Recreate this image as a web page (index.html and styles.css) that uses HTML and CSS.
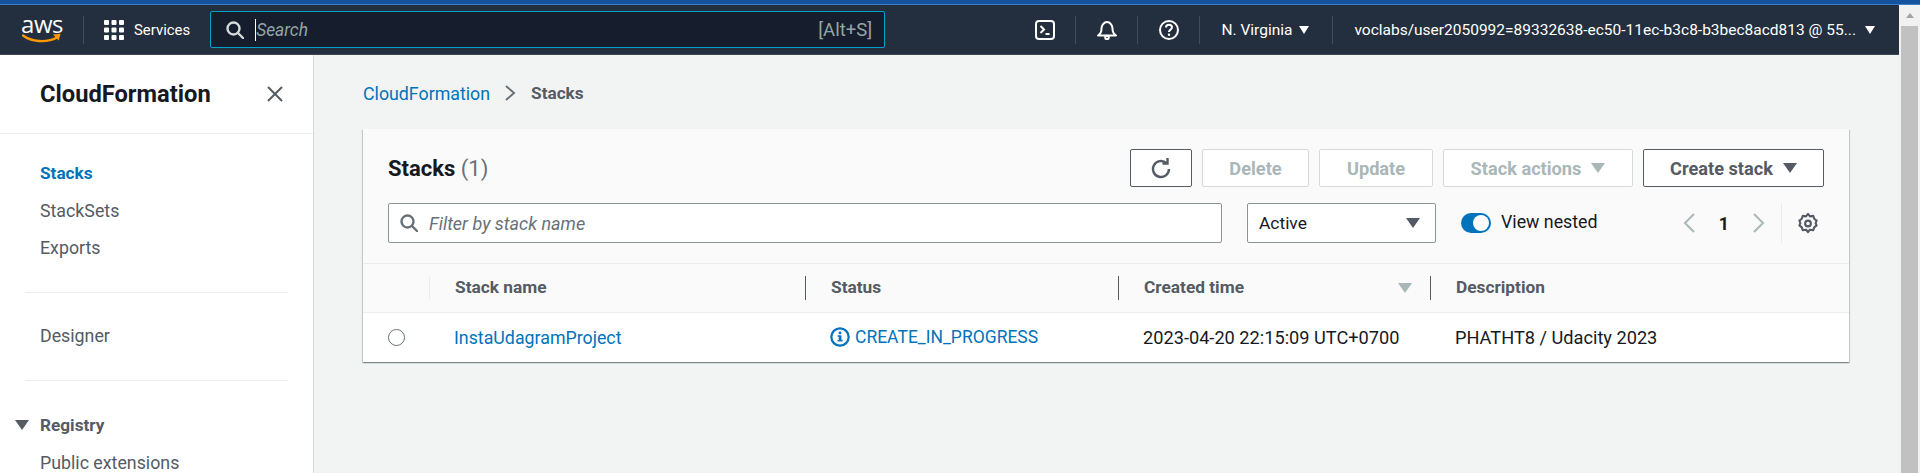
FILE: index.html
```html
<!DOCTYPE html>
<html lang="en">

    <head>
        <meta charset="UTF-8">
        <meta name="viewport" content="width=device-width, initial-scale=1.0">
        <title>Stacks - CloudFormation</title>
        <link rel="stylesheet" href="styles.css">
    </head>

    <body>
        <div class="top-strip"></div>
        <div class="page">
            <div class="page-content">
                <header class="topnav">
                    <a class="logo" href="#">
                        <span class="logo-text">aws</span>
                        <svg class="logo-smile" width="40" height="11" viewBox="0 0 40 11">
                            <path d="M1 2.5C9 8.5 24 10.5 35 4.5" fill="none" stroke="#f90" stroke-width="2.4" stroke-linecap="round" />
                            <path d="M31 1.6L38.6 0.8L36.6 7.6Z" fill="#f90" />
                        </svg>
                    </a>
                    <span class="nav-sep nav-sep-logo"></span>
                    <a class="services" href="#">
                        <svg width="20" height="20" viewBox="0 0 20 20" fill="#fff">
                            <rect x="0" y="0" width="5" height="5" rx="1" />
                            <rect x="7.5" y="0" width="5" height="5" rx="1" />
                            <rect x="15" y="0" width="5" height="5" rx="1" />
                            <rect x="0" y="7.5" width="5" height="5" rx="1" />
                            <rect x="7.5" y="7.5" width="5" height="5" rx="1" />
                            <rect x="15" y="7.5" width="5" height="5" rx="1" />
                            <rect x="0" y="15" width="5" height="5" rx="1" />
                            <rect x="7.5" y="15" width="5" height="5" rx="1" />
                            <rect x="15" y="15" width="5" height="5" rx="1" />
                        </svg>
                        <span>Services</span>
                    </a>
                    <div class="global-search">
                        <svg width="18" height="18" viewBox="0 0 18 18" fill="none" stroke="#d5dbdb" stroke-width="2.4">
                            <circle cx="7.5" cy="7.5" r="6" />
                            <path d="M12 12l5 5" stroke-linecap="round" />
                        </svg>
                        <span class="caret-line"></span>
                        <span class="search-hint">Search</span>
                        <span class="search-keys">[Alt+S]</span>
                    </div>
                    <div class="nav-right">
                        <a class="nav-icon" href="#">
                            <svg width="20" height="20" viewBox="0 0 20 20" fill="none" stroke="#fff" stroke-width="2">
                                <rect x="1" y="1" width="18" height="18" rx="3" />
                                <path d="M5.5 6l3.5 3.5-3.5 3.5M10.5 14h4" />
                            </svg>
                        </a>
                        <span class="nav-sep"></span>
                        <a class="nav-icon" href="#">
                            <svg width="20" height="20" viewBox="0 0 20 20" fill="none" stroke="#fff" stroke-width="2" stroke-linejoin="round">
                                <path d="M1 15.5c2.5-1.5 3.5-3.5 3.5-7 0-3.2 2.4-6.5 5.5-6.500s5.500 3.300 5.500 6.500c0 3.500 1 5.500 3.500 7z" />
                                <circle cx="10" cy="17.5" r="1.800" />
                            </svg>
                        </a>
                        <span class="nav-sep"></span>
                        <a class="nav-icon" href="#">
                            <svg width="20" height="20" viewBox="0 0 20 20" fill="none" stroke="#fff" stroke-width="2">
                                <circle cx="10" cy="10" r="9" />
                                <path d="M7 7.500c0-1.700 1.300-2.700 3-2.700s3 1 3 2.500c0 2.300-3 2.300-3 4.700" />
                                <circle cx="10" cy="14.800" r="1.200" fill="#fff" stroke="none" />
                            </svg>
                        </a>
                        <span class="nav-sep"></span>
                        <a class="nav-menu region" href="#">N. Virginia <i class="tri tri-white"></i></a>
                        <span class="nav-sep"></span>
                        <a class="nav-menu account" href="#">voclabs/user2050992=89332638-ec50-11ec-b3c8-b3bec8acd813 @ 55... <i class="tri tri-white"></i></a>
                    </div>
                </header>

                <div class="layout">
                    <aside class="sidebar">
                        <div class="sidebar-head">
                            <h2>CloudFormation</h2>
                            <svg width="18" height="18" viewBox="0 0 18 18" fill="none" stroke="#545b64" stroke-width="2">
                                <path d="M2 2l14 14M16 2L2 16" />
                            </svg>
                        </div>
                        <ul class="side-list side-first">
                            <li><a class="active" href="#">Stacks</a></li>
                            <li><a href="#">StackSets</a></li>
                            <li><a href="#">Exports</a></li>
                        </ul>
                        <hr class="side-divider">
                        <ul class="side-list side-single">
                            <li><a href="#">Designer</a></li>
                        </ul>
                        <hr class="side-divider">
                        <div class="side-group"><i class="tri tri-grey"></i>Registry</div>
                        <ul class="side-list">
                            <li><a href="#">Public extensions</a></li>
                        </ul>
                    </aside>

                    <main class="content">
                        <nav class="breadcrumb">
                            <a href="#">CloudFormation</a>
                            <svg width="12" height="18" viewBox="0 0 12 18" fill="none" stroke="#687078" stroke-width="2">
                                <path d="M2 2l8 7-8 7" />
                            </svg>
                            <span>Stacks</span>
                        </nav>

                        <section class="card">
                            <div class="card-head">
                                <div class="title-row">
                                    <h1>Stacks <span class="count">(1)</span></h1>
                                    <div class="actions">
                                        <button class="btn btn-refresh">
                                            <svg width="20" height="22" viewBox="0 0 20 22" fill="none" stroke="#545b64" stroke-width="2.4">
                                                <path d="M15.500 6.200A8 8 0 1 0 18 12" />
                                                <path d="M16.500 1v5.500h-5" />
                                            </svg>
                                        </button>
                                        <button class="btn btn-off btn-delete">Delete</button>
                                        <button class="btn btn-off btn-update">Update</button>
                                        <button class="btn btn-off btn-actions">Stack actions <i class="tri tri-off"></i></button>
                                        <button class="btn btn-create">Create stack <i class="tri tri-dark"></i></button>
                                    </div>
                                </div>
                                <div class="filter-row">
                                    <div class="filter-input">
                                        <svg width="18" height="18" viewBox="0 0 18 18" fill="none" stroke="#687078" stroke-width="2.4">
                                            <circle cx="7.500" cy="7.500" r="6" />
                                            <path d="M12 12l5 5" stroke-linecap="round" />
                                        </svg>
                                        <span>Filter by stack name</span>
                                    </div>
                                    <div class="select">Active <i class="tri tri-dark"></i></div>
                                    <div class="toggle-wrap">
                                        <span class="toggle"><span class="knob"></span></span>
                                        <span class="toggle-label">View nested</span>
                                    </div>
                                    <div class="pager">
                                        <svg width="12" height="20" viewBox="0 0 12 20" fill="none" stroke="#aab7b8" stroke-width="2">
                                            <path d="M11 1L2 10l9 9" />
                                        </svg>
                                        <span>1</span>
                                        <svg width="12" height="20" viewBox="0 0 12 20" fill="none" stroke="#aab7b8" stroke-width="2">
                                            <path d="M1 1l9 9-9 9" />
                                        </svg>
                                    </div>
                                    <div class="prefs">
                                        <svg width="20" height="21" viewBox="0 0 20 22" fill="none" stroke="#545b64" stroke-width="2.2" stroke-linejoin="round">
                                            <path d="M10 1l2 2.500 3.500-.5 1 3 2.500 2-1 2.500 1 2.500-2.500 2-1 3-3.500-.5-2 2.500-2-2.500-3.500.5-1-3-2.500-2 1-2.500-1-2.500 2.500-2 1-3 3.500.5z" />
                                            <circle cx="10" cy="11" r="3" />
                                        </svg>
                                    </div>
                                </div>
                            </div>
                            <div class="table-row table-head">
                                <div class="cell cell-check"></div>
                                <div class="cell">Stack name</div>
                                <div class="cell cell-dark">Status</div>
                                <div class="cell cell-dark cell-sort"><span class="sort-label">Created time</span> <i class="tri tri-off"></i></div>
                                <div class="cell cell-dark">Description</div>
                            </div>
                            <div class="table-row table-body">
                                <div class="cell cell-check"><span class="radio"></span></div>
                                <div class="cell"><a href="#">InstaUdagramProject</a></div>
                                <div class="cell status">
                                    <svg width="20" height="20" viewBox="0 0 18 18">
                                        <circle cx="9" cy="9" r="7.800" fill="none" stroke="#0073bb" stroke-width="2" />
                                        <rect x="7.900" y="7.500" width="2.400" height="5" fill="#0073bb" />
                                        <rect x="6.800" y="11.600" width="4.600" height="1.400" fill="#0073bb" />
                                        <rect x="6.800" y="7.500" width="2" height="1.300" fill="#0073bb" />
                                        <circle cx="9" cy="5.300" r="1.300" fill="#0073bb" />
                                    </svg>
                                    <a href="#">CREATE_IN_PROGRESS</a>
                                </div>
                                <div class="cell cell-wide">2023-04-20 22:15:09 UTC+0700</div>
                                <div class="cell cell-wide">PHATHT8 / Udacity 2023</div>
                            </div>
                        </section>
                    </main>
                </div>
            </div>
            <div class="scrollbar">
                <span class="scroll-up"></span>
                <span class="scroll-thumb"></span>
            </div>
        </div>
    </body>

</html>
```
FILE: styles.css
```css
:root {
    --nav-bg: #232f3e;
    --link: #0073bb;
    --text: #16191f;
    --text-grey: #545b64;
    --line: #eaeded;
    --off: #aab7b8;
}

*,
*::before,
*::after {
    box-sizing: border-box;
}

html,
body {
    height: 100%;
}

body {
    margin: 0;
    overflow: hidden;
    font-family: Roboto, "Liberation Sans", sans-serif;
    font-size: 17.8px;
    color: var(--text);
    background: #f2f3f3;
}

a {
    color: inherit;
    text-decoration: none;
}

.top-strip {
    height: 4px;
    background: #15539e;
}

.page {
    display: flex;
    height: calc(100% - 4px);
    border-top: 1px solid #3d7fc4;
}

.page-content {
    flex: 1;
    min-width: 0;
    display: flex;
    flex-direction: column;
}

/* triangles used for every dropdown */
.tri {
    display: inline-block;
    width: 0;
    height: 0;
    border-left: 7px solid transparent;
    border-right: 7px solid transparent;
    border-top: 10px solid #fff;
}

.tri-white {
    border-left-width: 5px;
    border-right-width: 5px;
    border-top-width: 8px;
    margin-left: 7px;
}

.tri-grey {
    border-top-color: var(--text-grey);
}

.tri-off {
    border-top-color: var(--off);
}

.tri-dark {
    border-top-color: var(--text-grey);
}

/* top nav */
.topnav {
    height: 50px;
    flex: none;
    display: flex;
    align-items: center;
    background: var(--nav-bg);
    color: #fff;
    font-size: 15.5px;
    border-bottom: 1px solid #414750;
}

.logo {
    width: 40px;
    margin-left: 22px;
    display: flex;
    flex-direction: column;
    align-items: center;
}

.logo-text {
    font-family: "Open Sans", sans-serif;
    font-size: 24px;
    line-height: 16px;
    height: 16px;
    letter-spacing: -0.5px;
}

.logo-smile {
    display: block;
    margin-top: 1px;
}

.nav-sep {
    width: 1px;
    height: 28px;
    background: #414d5c;
    flex: none;
}

.nav-sep-logo {
    margin-left: 21px;
}

.services {
    display: flex;
    align-items: center;
    gap: 10px;
    margin-left: 20px;
    font-size: 14.9px;
}

.global-search {
    width: 675px;
    height: 37px;
    margin-left: 20px;
    padding: 0 12px 0 15px;
    display: flex;
    align-items: center;
    background: #161e2d;
    border: 1px solid #00a1c9;
    border-radius: 2px;
    color: #95a5a6;
    font-size: 17.4px;
}

.caret-line {
    width: 1px;
    height: 22px;
    margin-left: 11px;
    background: #fff;
}

.search-hint {
    font-style: italic;
}

.search-keys {
    margin-left: auto;
    font-size: 18.5px;
}

.nav-right {
    margin-left: auto;
    display: flex;
    align-items: center;
}

.nav-icon {
    display: flex;
    width: 61px;
    height: 28px;
    align-items: center;
    justify-content: center;
}

.nav-menu {
    display: flex;
    align-items: center;
    white-space: nowrap;
}

.region {
    padding: 0 23px 0 21px;
}

.account {
    padding: 0 24px 0 21px;
}

.account .tri {
    margin-left: 9px;
}

/* layout */
.layout {
    flex: 1;
    min-height: 0;
    display: flex;
}

.sidebar {
    width: 314px;
    flex: none;
    background: #fff;
    border-right: 1px solid #d5dbdb;
    overflow: hidden;
}

.sidebar-head {
    height: 79px;
    padding: 0 29px 0 40px;
    display: flex;
    align-items: center;
    justify-content: space-between;
    border-bottom: 1px solid var(--line);
}

.sidebar-head h2 {
    margin: 0;
    font-size: 23.700px;
    font-weight: 700;
}

.side-list {
    list-style: none;
    margin: 0;
    padding: 0 0 0 40px;
    color: var(--text-grey);
}

.side-list li {
    height: 37.5px;
    display: flex;
    align-items: center;
}

.side-first {
    padding-top: 20px;
}

.side-single {
    padding-bottom: 1px;
    margin-top: -1px;
}

.side-list .active {
    color: var(--link);
    font-weight: 700;
    font-size: 17.2px;
}

.side-divider {
    margin: 25px 25px 25px;
    border: 0;
    border-top: 1px solid var(--line);
}

.side-group {
    display: flex;
    align-items: center;
    height: 38px;
    padding-left: 15px;
    margin-top: 9px;
    font-weight: 700;
    font-size: 17.2px;
    color: var(--text-grey);
}

.side-group .tri {
    margin-right: 11px;
}

/* content */
.content {
    flex: 1;
    min-width: 0;
    padding: 0 50px 0 49px;
}

.breadcrumb {
    height: 74px;
    padding-top: 2px;
    display: flex;
    align-items: center;
    gap: 14px;
    color: var(--link);
}

.breadcrumb span {
    color: var(--text-grey);
    font-weight: 700;
    font-size: 17.2px;
    margin-left: 1px;
}

.card {
    background: #fff;
    box-shadow: 0 1px 1px 0 rgba(0, 28, 36, 0.3), 1px 1px 1px 0 rgba(0, 28, 36, 0.15), -1px 1px 1px 0 rgba(0, 28, 36, 0.15);
}

.card-head {
    padding: 20px 25px 20px;
    background: #fafafa;
    border-bottom: 1px solid var(--line);
}

.title-row {
    display: flex;
    align-items: center;
    justify-content: space-between;
}

.title-row h1 {
    margin: 0;
    font-size: 22px;
    font-weight: 700;
}

.count {
    font-weight: 400;
    color: #687078;
}

.actions {
    display: flex;
    gap: 10px;
}

.btn {
    height: 38px;
    border: 1px solid var(--text-grey);
    border-radius: 2px;
    background: #fff;
    font: 700 18.2px Roboto, sans-serif;
    color: var(--text-grey);
    display: flex;
    align-items: center;
    justify-content: center;
    gap: 10px;
    padding: 0;
}

.btn-off {
    color: var(--off);
    border-color: #d5dbdb;
}

.btn-refresh {
    width: 62px;
}

.btn-delete {
    width: 107px;
}

.btn-update {
    width: 114px;
}

.btn-actions {
    width: 190px;
}

.btn-create {
    width: 181px;
}

.filter-row {
    margin-top: 16px;
    display: flex;
    align-items: center;
}

.filter-input {
    width: 834px;
    height: 40px;
    padding-left: 11px;
    display: flex;
    align-items: center;
    gap: 11px;
    background: #fff;
    border: 1px solid #879596;
    border-radius: 2px;
    font-style: italic;
    color: #687078;
    font-size: 18px;
}

.select {
    width: 189px;
    height: 40px;
    margin-left: 25px;
    padding: 0 15px 0 11px;
    display: flex;
    align-items: center;
    justify-content: space-between;
    background: #fff;
    border: 1px solid #879596;
    border-radius: 2px;
    font-size: 17.4px;
}

.toggle-wrap {
    display: flex;
    align-items: center;
    gap: 10px;
    margin-left: 25px;
}

.toggle {
    width: 30px;
    height: 20px;
    padding: 2px;
    display: flex;
    justify-content: flex-end;
    border-radius: 10px;
    background: var(--link);
}

.knob {
    width: 16px;
    height: 16px;
    border-radius: 50%;
    background: #fff;
}

.toggle-label {
    margin-top: -4px;
}

.pager {
    margin-left: auto;
    display: flex;
    align-items: center;
    gap: 24px;
    font-weight: 700;
}

.prefs {
    height: 40px;
    margin-left: 16px;
    padding-left: 16px;
    margin-right: 6px;
    display: flex;
    align-items: center;
    border-left: 1px solid var(--line);
}

/* table */
.table-row {
    display: grid;
    grid-template-columns: 66px 376px 313px 312px 1fr;
}

.table-head {
    height: 49px;
    align-items: center;
    background: #fafafa;
    border-bottom: 1px solid var(--line);
    font-weight: 700;
    font-size: 17.3px;
    color: var(--text-grey);
}

.table-body {
    height: 49px;
    padding-bottom: 1px;
    align-items: center;
}

.cell {
    padding-left: 25px;
}

.cell-wide {
    font-size: 18.2px;
}

.cell-check {
    height: 24px;
    display: flex;
    align-items: center;
}

.table-head .cell {
    height: 24px;
    line-height: 22px;
    border-left: 1px solid #545b64;
}

.table-head .cell-check {
    border-left: 0;
}

.table-head .cell-check + .cell {
    border-left-color: var(--line);
}

.table-body .cell a {
    color: var(--link);
}

.cell-sort {
    display: flex;
    align-items: center;
    justify-content: space-between;
    padding-right: 18px;
}

.sort-label {
    margin-top: -2px;
}

.radio {
    width: 17px;
    height: 17px;
    border: 1px solid #687078;
    border-radius: 50%;
    background: #fff;
}

.status {
    display: flex;
    align-items: center;
    gap: 5px;
    font-size: 17.5px;
}

/* browser scrollbar */
.scrollbar {
    width: 21px;
    flex: none;
    padding: 0 2px;
    background: #f1f1f1;
    display: flex;
    flex-direction: column;
    align-items: center;
}

.scroll-up {
    margin-top: 8px;
    width: 0;
    height: 0;
    border-left: 4px solid transparent;
    border-right: 4px solid transparent;
    border-bottom: 5px solid #a3a3a3;
}

.scroll-thumb {
    width: 100%;
    margin-top: 8px;
    flex: 1;
    background: #c1c1c1;
}
```
